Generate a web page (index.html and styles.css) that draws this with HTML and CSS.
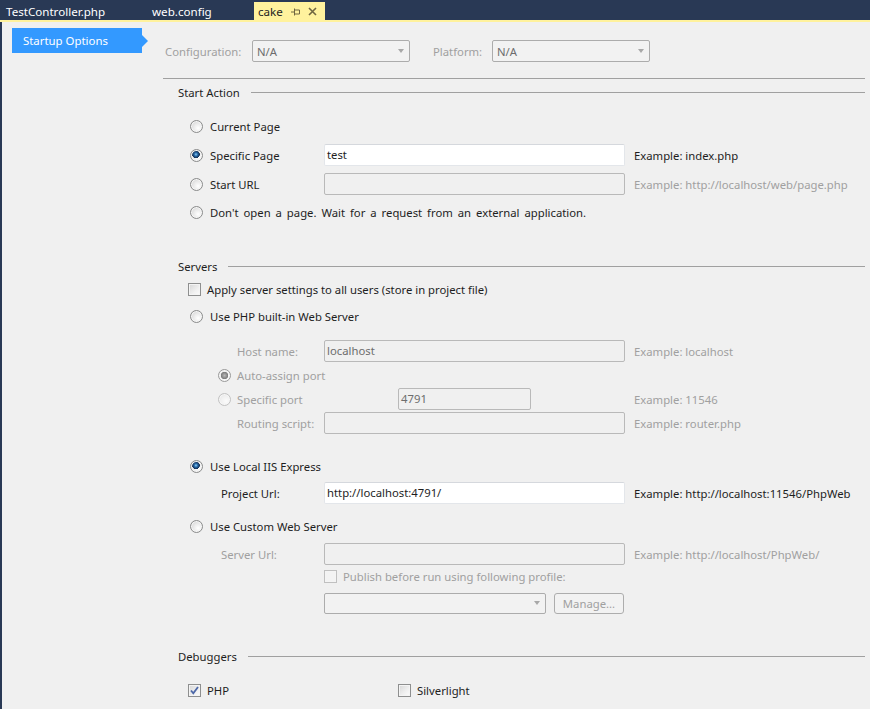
FILE: index.html
```html
<!DOCTYPE html>
<html>
<head>
<meta charset="utf-8">
<link rel="stylesheet" href="styles.css">
</head>
<body>
<div class="tabbar">
  <div class="tab t1">TestController.php</div>
  <div class="tab t2">web.config</div>
  <div class="tab active">
    <span>cake</span>
    <svg class="pin" width="9" height="8" viewBox="0 0 9 8"><path d="M0 4H3M3.5 0.5V7.5M3.5 2H8.5V6H3.5" fill="none" stroke="#6f6640" stroke-width="1"/></svg>
    <svg class="close" width="9" height="9" viewBox="0 0 9 9"><path d="M1 1L8 8M8 1L1 8" stroke="#6f6640" stroke-width="1.6"/></svg>
  </div>
</div>
<div class="tabline"></div>
<div class="main">
  <div class="sidebar">
    <div class="navitem">Startup Options</div>
  </div>
  <div class="content">
    <div class="configrow">
      <span class="cfglabel">Configuration:</span>
      <div class="select"><span>N/A</span><span class="caret"></span></div>
      <span class="cfglabel plat">Platform:</span>
      <div class="select"><span>N/A</span><span class="caret"></span></div>
    </div>
    <div class="rule"></div>

    <div class="heading"><span>Start Action</span></div>
    <div class="group start">
      <div class="row">
        <div class="opt wide"><span class="radio"></span><span>Current Page</span></div>
      </div>
      <div class="row">
        <div class="opt"><span class="radio on"></span><span>Specific Page</span></div>
        <div class="input">test</div>
        <div class="example">Example: index.php</div>
      </div>
      <div class="row">
        <div class="opt"><span class="radio"></span><span>Start URL</span></div>
        <div class="input disabled"></div>
        <div class="example dim">Example: http://localhost/web/page.php</div>
      </div>
      <div class="row tight">
        <div class="opt wide"><span class="radio"></span><span class="longlabel">Don't open a page. Wait for a request from an external application.</span></div>
      </div>
    </div>

    <div class="heading servers"><span>Servers</span></div>
    <div class="row apply">
      <div class="chk wide"><span class="check"></span><span>Apply server settings to all users (store in project file)</span></div>
    </div>
    <div class="row phpserver">
      <div class="opt wide"><span class="radio"></span><span>Use PHP built-in Web Server</span></div>
    </div>
    <div class="group sub">
      <div class="row">
        <div class="sublabel dim">Host name:</div>
        <div class="input disabled val">localhost</div>
        <div class="example dim">Example: localhost</div>
      </div>
      <div class="row">
        <div class="subopt wide dim"><span class="radio off on"></span><span>Auto-assign port</span></div>
      </div>
      <div class="row">
        <div class="subopt dim"><span class="radio off"></span><span>Specific port</span></div>
        <div><div class="input disabled val port">4791</div></div>
        <div class="example dim">Example: 11546</div>
      </div>
      <div class="row">
        <div class="sublabel dim">Routing script:</div>
        <div class="input disabled"></div>
        <div class="example dim">Example: router.php</div>
      </div>
    </div>
    <div class="row iis">
      <div class="opt wide"><span class="radio on"></span><span>Use Local IIS Express</span></div>
    </div>
    <div class="row projurl">
      <div class="fieldlabel">Project Url:</div>
      <div class="input">http://localhost:4791/</div>
      <div class="example">Example: http://localhost:11546/PhpWeb</div>
    </div>
    <div class="row custom">
      <div class="opt wide"><span class="radio"></span><span>Use Custom Web Server</span></div>
    </div>
    <div class="row serverurl">
      <div class="fieldlabel dim">Server Url:</div>
      <div class="input disabled"></div>
      <div class="example dim">Example: http://localhost/PhpWeb/</div>
    </div>
    <div class="row publish">
      <div></div>
      <div class="chkinline dim"><span class="check off"></span><span>Publish before run using following profile:</span></div>
    </div>
    <div class="row profile">
      <div></div>
      <div class="profilebox">
        <div class="select wideselect"><span></span><span class="caret"></span></div>
        <div class="button">Manage...</div>
      </div>
    </div>

    <div class="heading debuggers"><span>Debuggers</span></div>
    <div class="row dbg">
      <div class="chk"><span class="check on"><svg width="11" height="11" viewBox="0 0 11 11"><path d="M2 5.5L4.3 8.3L9 2" fill="none" stroke="#4d68a8" stroke-width="1.8"/></svg></span><span>PHP</span></div>
      <div class="chkinline sl"><span class="check"></span><span>Silverlight</span></div>
    </div>
  </div>
</div>
</body>
</html>
```
FILE: styles.css
```css
* { box-sizing: border-box; }
html, body { margin: 0; padding: 0; }
body {
  width: 870px;
  height: 709px;
  overflow: hidden;
  background: #f0f0f0;
  font-family: "Noto Sans", "Open Sans", sans-serif;
  font-size: 11.3px;
  color: #1e1e1e;
}
.tabbar {
  height: 20px;
  background: #293955;
  display: flex;
  align-items: flex-end;
}
.tab {
  height: 18px;
  line-height: 19px;
  color: #fff;
  font-size: 11.6px;
  padding-left: 6px;
  white-space: nowrap;
}
.t1 { width: 146px; }
.t2 { width: 108px; }
.tab.active {
  width: 71px;
  padding-left: 4px;
  background: #fff29d;
  color: #1e1e1e;
  display: flex;
  align-items: center;
}
.tab.active span { line-height: 18px; padding-top: 1px; }
.pin { margin-left: 8px; margin-top: 1px; }
.close { margin-left: 8px; margin-top: 1px; }
.tabline { height: 2px; background: #fff29d; }

.main {
  display: flex;
  height: 687px;
  border-left: 2px solid #293955;
}
.sidebar {
  width: 161px;
  flex: none;
  padding: 6px 0 0 10px;
}
.navitem {
  position: relative;
  width: 130px;
  height: 25px;
  line-height: 25px;
  background: #3399ff;
  color: #fff;
  padding-left: 11px;
  font-size: 11.4px;
}
.navitem::after {
  content: "";
  position: absolute;
  left: 100%;
  top: 7px;
  border-left: 6px solid #3399ff;
  border-top: 6px solid transparent;
  border-bottom: 6px solid transparent;
}
.content {
  flex: 1;
  padding: 18px 5px 0 0;
}
.configrow {
  display: flex;
  align-items: center;
  height: 22px;
  color: #a0a0a0;
}
.cfglabel { width: 89px; padding-left: 2px; }
.cfglabel.plat { width: 82px; padding-left: 23px; }
.select {
  width: 158px;
  height: 22px;
  border: 1px solid #acacac;
  border-radius: 2px;
  background: #f2f2f2;
  display: flex;
  align-items: center;
  justify-content: space-between;
  padding: 0 5px 0 4px;
  color: #6d6d6d;
}
.caret {
  width: 0;
  height: 0;
  border-left: 3.5px solid transparent;
  border-right: 3.5px solid transparent;
  border-top: 4px solid #a8a8a8;
}
.rule { height: 1px; background: #a0a0a0; margin-top: 16px; }

.heading {
  display: flex;
  align-items: center;
  height: 16px;
  margin-top: 5px;
  padding-left: 15px;
  color: #1e1e1e;
}
.heading::after {
  content: "";
  flex: 1;
  height: 1px;
  background: #a0a0a0;
  margin-left: 11px;
}
.heading.servers { margin-top: 35px; }
.heading.debuggers { margin-top: 34px; }

.group { display: flex; flex-direction: column; gap: 7px; }
.group.start { margin-top: 15px; }
.group.sub { margin-top: 13px; gap: 2px; }
.row.tight { margin-top: -1px; }

.row {
  display: grid;
  grid-template-columns: 161px 301px 1fr;
  align-items: center;
  height: 22px;
  white-space: nowrap;
}
.row.apply { margin-top: 4px; }
.row.phpserver { margin-top: 5px; }
.row.iis { margin-top: 21px; }
.row.projurl { margin-top: 5px; }
.row.custom { margin-top: 11px; }
.row.serverurl { margin-top: 6px; }
.row.publish { margin-top: 0; }
.row.profile { margin-top: 5px; }
.row.dbg { margin-top: 15px; }

.wide { grid-column: 1 / -1; }
.opt, .chk, .subopt, .chkinline { display: flex; align-items: center; }
.opt { padding-left: 27px; gap: 7px; }
.chk { padding-left: 25px; gap: 6px; }
.subopt { padding-left: 55px; gap: 6px; }
.chkinline { gap: 6px; }
.chkinline.sl { margin-left: 74px; }
.sublabel { padding-left: 74px; }
.fieldlabel { padding-left: 58px; }
.dim { color: #a0a0a0; }
.longlabel { word-spacing: 2px; }

.radio {
  flex: none;
  width: 13px;
  height: 13px;
  border-radius: 50%;
  border: 1px solid #8a8b8b;
  background: radial-gradient(circle at 65% 65%, #ffffff 0, #eaeaea 45%, #c9c9c9 100%);
  box-shadow: inset 0 0 0 1px #f6f6f6;
}
.radio.on {
  background:
    radial-gradient(circle at 45% 40%, #8fd0f5 0, #2b6fae 1.6px, #173e6b 3px, #112d52 3.6px, transparent 4px),
    radial-gradient(circle at 65% 65%, #ffffff 0, #eaeaea 45%, #c9c9c9 100%);
}
.radio.off {
  border-color: #c2c2c2;
  background: radial-gradient(circle at 65% 65%, #fbfbfb 0, #f0f0f0 50%, #e0e0e0 100%);
}
.radio.off.on {
  background:
    radial-gradient(circle at 50% 50%, #b8b8b8 0, #8a8a8a 2.6px, #7a7a7a 3.4px, transparent 4px),
    radial-gradient(circle at 65% 65%, #fbfbfb 0, #f0f0f0 50%, #e0e0e0 100%);
  border-color: #9a9a9a;
}
.check {
  flex: none;
  width: 13px;
  height: 13px;
  border: 1px solid #8e8f8f;
  background: linear-gradient(135deg, #d6d6d6 0, #f0f0f0 60%, #fbfbfb 100%);
  box-shadow: inset 0 0 0 1px #f4f4f4;
  display: flex;
  align-items: center;
  justify-content: center;
}
.check.off { border-color: #c0c0c0; background: #f3f3f3; }
.check svg { display: block; }

.input {
  height: 22px;
  background: #fff;
  border: 1px solid #e3e6ea;
  border-top-color: #d5d8dd;
  border-radius: 2px;
  padding: 0 2px;
  line-height: 20px;
  color: #1e1e1e;
}
.input.disabled {
  background: #f0f0f0;
  border: 1px solid #b9b9b9;
}
.input.val { color: #6d6d6d; }
.input.port { margin-left: 74px; width: 133px; }
.example { padding-left: 9px; }

.profilebox { display: flex; align-items: center; gap: 8px; }
.select.wideselect { width: 222px; height: 21px; }
.button {
  width: 70px;
  height: 21px;
  border: 1px solid #adadad;
  border-radius: 3px;
  background: #f2f2f2;
  color: #a0a0a0;
  text-align: center;
  line-height: 19px;
}
```
